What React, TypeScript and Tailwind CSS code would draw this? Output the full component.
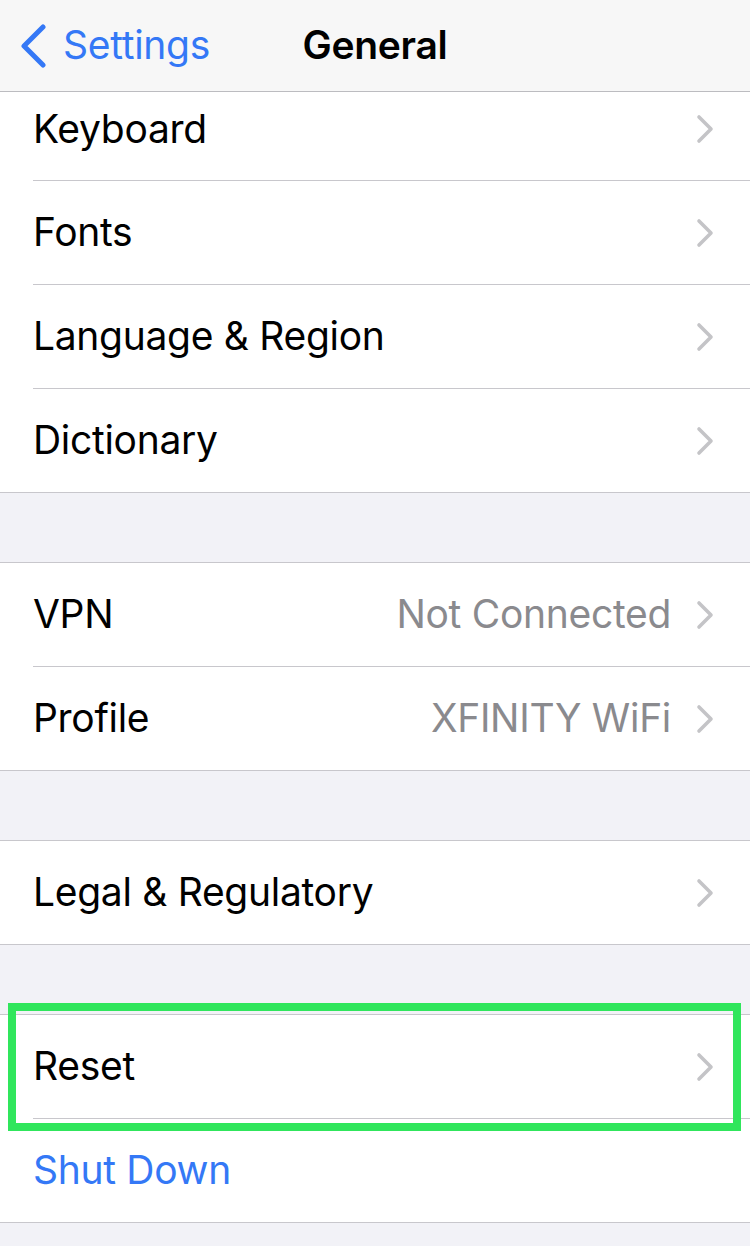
import React from 'react';

type Row = {
  label: string;
  value?: string;
  chevron?: boolean;
  blue?: boolean;
  clipped?: boolean;
};

const Chevron: React.FC = () => (
  <svg width="20" height="30" viewBox="0 0 20 30" className="shrink-0">
    <path
      d="M4 3 L16 15 L4 27"
      fill="none"
      stroke="#c4c4c7"
      strokeWidth="3.6"
      strokeLinecap="round"
      strokeLinejoin="round"
    />
  </svg>
);

const SettingsRow: React.FC<{ row: Row; last: boolean }> = ({ row, last }) => (
  <>
    <div
      className={`flex items-center pl-[33px] pr-[35px] ${
        row.clipped ? 'h-[88px] pb-[14px]' : 'h-[103px]'
      }`}
    >
      <span
        className={`text-[39px] tracking-[-0.3px] flex-1 ${
          row.blue ? 'text-[#3478f6]' : 'text-black'
        }`}
      >
        {row.label}
      </span>
      {row.value && (
        <span className="text-[39px] tracking-[-0.3px] text-[#8a8a8e] mr-[24px]">{row.value}</span>
      )}
      {row.chevron !== false && <Chevron />}
    </div>
    {!last && <div className="h-px bg-[#c8c7cc] ml-[33px]" />}
  </>
);

const Group: React.FC<{ rows: Row[]; top?: boolean; children?: React.ReactNode }> = ({
  rows,
  top = true,
  children,
}) => (
  <div className={`relative bg-white border-b border-[#c8c7cc] ${top ? 'border-t' : ''}`}>
    {rows.map((r, i) => (
      <SettingsRow key={r.label} row={r} last={i === rows.length - 1} />
    ))}
    {children}
  </div>
);

const Gap: React.FC = () => <div className="h-[69px]" />;

export default function App() {
  return (
    <div
      className="w-[750px] h-[1246px] overflow-hidden bg-[#f2f2f7]"
      style={{ fontFamily: 'Inter, "Liberation Sans", sans-serif' }}
    >
      <div className="relative h-[92px] bg-[#f7f7f7] border-b border-[#bcbcc0] flex items-center">
        <div className="flex items-center pl-[18px] text-[#3478f6]">
          <svg width="30" height="44" viewBox="0 0 30 44">
            <path
              d="M25 3 L6 22 L25 41"
              fill="none"
              stroke="#3478f6"
              strokeWidth="5"
              strokeLinecap="round"
              strokeLinejoin="round"
            />
          </svg>
          <span className="text-[39px] ml-[15px] tracking-[-0.3px]">Settings</span>
        </div>
        <span className="absolute left-0 right-0 text-center text-[39px] font-semibold text-black tracking-[-0.3px] pointer-events-none">
          General
        </span>
      </div>

      <Group
        top={false}
        rows={[
          { label: 'Keyboard', clipped: true },
          { label: 'Fonts' },
          { label: 'Language & Region' },
          { label: 'Dictionary' },
        ]}
      />
      <Gap />
      <Group
        rows={[
          { label: 'VPN', value: 'Not Connected' },
          { label: 'Profile', value: 'XFINITY WiFi' },
        ]}
      />
      <Gap />
      <Group rows={[{ label: 'Legal & Regulatory' }]} />
      <Gap />
      <Group
        rows={[
          { label: 'Reset' },
          { label: 'Shut Down', blue: true, chevron: false },
        ]}
      >
        <div className="absolute left-[8px] right-[9px] top-[-12px] h-[128px] border-[8px] border-[#30e65c] pointer-events-none" />
      </Group>
    </div>
  );
}
